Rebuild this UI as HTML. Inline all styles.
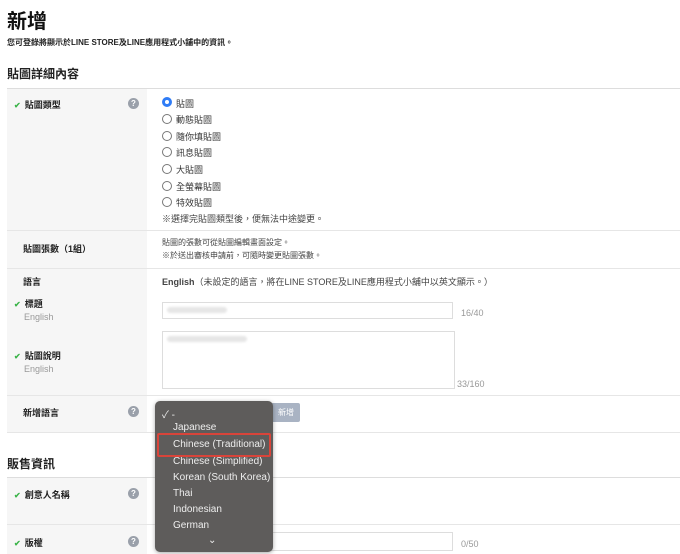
<!DOCTYPE html>
<html><head><meta charset="utf-8">
<style>
*{margin:0;padding:0;box-sizing:border-box}
body{width:680px;height:554px;overflow:hidden;background:#fff;font-family:"Liberation Sans","Noto Sans CJK TC",sans-serif;color:#333;position:relative}
.a{position:absolute;white-space:nowrap}
.f9{font-size:9px}
.lb{font-size:9px;color:#222;font-weight:600}
.lb .gray{font-weight:normal}
.ck{color:#3cb44a;font-size:8px;margin-right:4px}
.q{position:absolute;width:11px;height:11px;border-radius:50%;background:#9aa0aa;color:#fff;font-size:8px;font-weight:bold;text-align:center;line-height:11px}
.rd{position:absolute;width:10px;height:10px;border-radius:50%;border:1px solid #777;background:#fff}
.hl{position:absolute;left:7px;width:673px;height:1px;background:#e6e6e6}
.gray{color:#999}
.dd{position:absolute;left:155px;top:401px;width:118px;height:151px;background:#5e5c5b;border-radius:5px;box-shadow:0 1px 4px rgba(0,0,0,.35)}
.dd div{position:absolute;left:18px;color:#eee;font-size:10px;white-space:nowrap}
</style></head><body>
<div class="a" style="left:7px;top:5px;font-size:20px;font-weight:bold;color:#111">新增</div>
<div class="a" style="left:7px;top:37px;font-size:8px;color:#222;font-weight:600">您可登錄將顯示於LINE STORE及LINE應用程式小舖中的資訊。</div>
<div class="a" style="left:7px;top:65px;font-size:12px;font-weight:bold;color:#222">貼圖詳細內容</div>

<div style="position:absolute;left:7px;top:88px;width:140px;height:344px;background:#f6f6f6"></div>
<div class="hl" style="top:88px;background:#ddd"></div>
<div class="hl" style="top:230px"></div>
<div class="hl" style="top:268px"></div>
<div class="hl" style="top:395px"></div>
<div class="hl" style="top:432px"></div>

<div class="a lb" style="left:14px;top:98px"><span class="ck">✔</span>貼圖類型</div>
<div class="q" style="left:128px;top:98px">?</div>
<div class="rd" style="left:162px;top:97px;border:3px solid #2f7cf6"></div>
<div class="a f9" style="left:176px;top:97px">貼圖</div>
<div class="rd" style="left:162px;top:114px"></div><div class="a f9" style="left:176px;top:113px">動態貼圖</div>
<div class="rd" style="left:162px;top:131px"></div><div class="a f9" style="left:176px;top:130px">隨你填貼圖</div>
<div class="rd" style="left:162px;top:147px"></div><div class="a f9" style="left:176px;top:146px">訊息貼圖</div>
<div class="rd" style="left:162px;top:164px"></div><div class="a f9" style="left:176px;top:163px">大貼圖</div>
<div class="rd" style="left:162px;top:181px"></div><div class="a f9" style="left:176px;top:180px">全螢幕貼圖</div>
<div class="rd" style="left:162px;top:197px"></div><div class="a f9" style="left:176px;top:196px">特效貼圖</div>
<div class="a f9" style="left:162px;top:212px;color:#444">※選擇完貼圖類型後，便無法中途變更。</div>

<div class="a lb" style="left:23px;top:242px">貼圖張數（1組）</div>
<div class="a" style="left:162px;top:236px;font-size:8px;line-height:13px;color:#444">貼圖的張數可從貼圖編輯畫面設定。<br>※於送出審核申請前，可隨時變更貼圖張數。</div>

<div class="a lb" style="left:23px;top:275px">語言</div>
<div class="a f9" style="left:162px;top:275px;color:#444"><b>English</b>（未設定的語言，將在LINE STORE及LINE應用程式小舖中以英文顯示。）</div>
<div class="a lb" style="left:14px;top:298px;line-height:13px"><span class="ck">✔</span>標題<br><span class="gray" style="margin-left:10px">English</span></div>
<div style="position:absolute;left:162px;top:302px;width:291px;height:17px;border:1px solid #ddd"></div>
<div style="position:absolute;left:167px;top:307px;width:60px;height:6px;background:#e6e6e6;border-radius:3px;filter:blur(1px)"></div>
<div class="a f9 gray" style="left:461px;top:308px">16/40</div>
<div class="a lb" style="left:14px;top:350px;line-height:13px"><span class="ck">✔</span>貼圖說明<br><span class="gray" style="margin-left:10px">English</span></div>
<div style="position:absolute;left:162px;top:331px;width:293px;height:58px;border:1px solid #ddd"></div>
<div style="position:absolute;left:167px;top:336px;width:80px;height:6px;background:#e6e6e6;border-radius:3px;filter:blur(1px)"></div>
<div class="a f9 gray" style="left:457px;top:379px">33/160</div>

<div class="a lb" style="left:23px;top:406px">新增語言</div>
<div class="q" style="left:128px;top:406px">?</div>
<div style="position:absolute;left:270px;top:403px;width:30px;height:19px;background:#a9b3c3;border-radius:2px;color:#fff;font-size:8px;line-height:19px;text-align:right;padding-right:6px">新增</div>

<div class="a" style="left:7px;top:455px;font-size:12px;font-weight:bold;color:#222">販售資訊</div>
<div style="position:absolute;left:7px;top:477px;width:140px;height:77px;background:#f6f6f6"></div>
<div class="hl" style="top:477px;background:#ddd"></div>
<div class="hl" style="top:524px"></div>
<div class="a lb" style="left:14px;top:488px"><span class="ck">✔</span>創意人名稱</div>
<div class="q" style="left:128px;top:488px">?</div>
<div class="a lb" style="left:14px;top:536px"><span class="ck">✔</span>版權</div>
<div class="q" style="left:128px;top:536px">?</div>
<div style="position:absolute;left:262px;top:532px;width:191px;height:19px;border:1px solid #ddd"></div>
<div class="a f9 gray" style="left:461px;top:539px">0/50</div>

<div class="dd">
<div style="left:7px;top:5px">✓ -</div>
<div style="top:21px">Japanese</div>
<div style="top:38px">Chinese (Traditional)</div>
<div style="top:55px">Chinese (Simplified)</div>
<div style="top:71px">Korean (South Korea)</div>
<div style="top:87px">Thai</div>
<div style="top:103px">Indonesian</div>
<div style="top:119px">German</div>
<div style="left:53px;top:134px;font-size:10px">⌄</div>
</div>
<div style="position:absolute;left:157px;top:433px;width:114px;height:24px;border:2px solid #d9443a;border-radius:2px"></div>
</body></html>
